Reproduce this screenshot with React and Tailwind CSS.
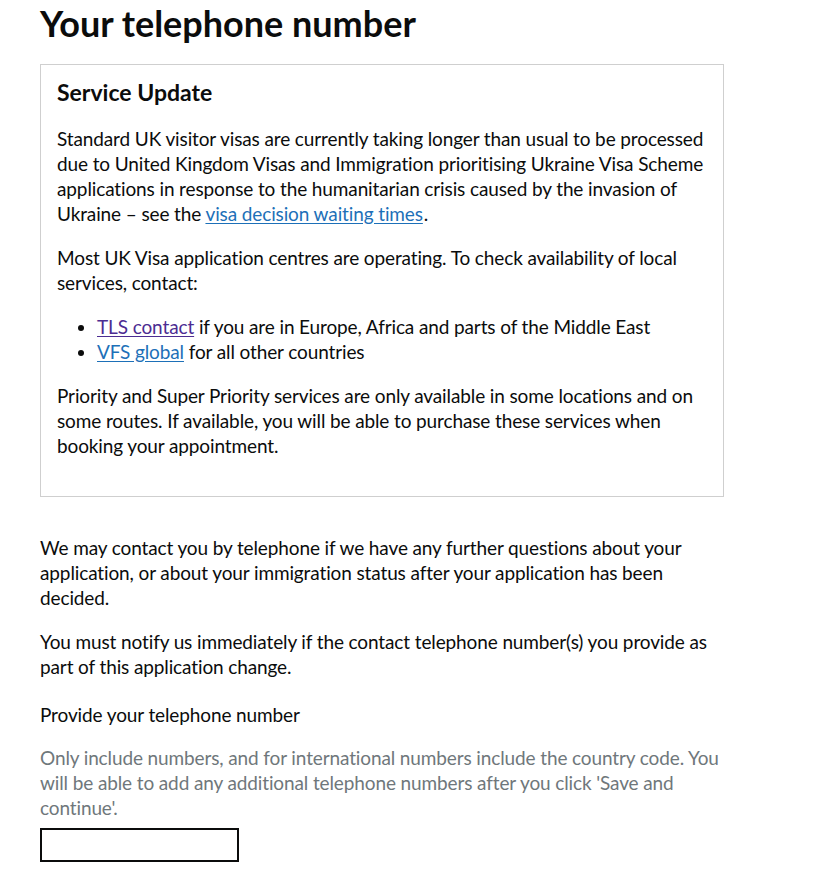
export default function App() {
  return (
    <div
      className="min-h-[891px] bg-white px-10 pb-8 text-[#0b0c0c] tracking-[-0.12px]"
      style={{ fontFamily: "Lato, 'Liberation Sans', sans-serif" }}
    >
      <h1 className="pt-[1px] text-[36px] font-bold leading-[44px] tracking-normal">Your telephone number</h1>

      <div className="mt-[19px] w-[684px] border border-[#cfcfcf] px-4 pt-[12px] pb-[38px] text-[19px] leading-[25px]">
        <h2 className="mb-[19px] text-[23px] font-bold leading-[30px] tracking-normal">Service Update</h2>
        <p className="mb-[19px]">
          Standard UK visitor visas are currently taking longer than usual to be processed due to United
          Kingdom Visas and Immigration prioritising Ukraine Visa Scheme applications in response to the
          humanitarian crisis caused by the invasion of Ukraine – see the{" "}
          <a href="#" className="mr-[1px] text-[#1d70b8] underline underline-offset-2">
            visa decision waiting times
          </a>
          .
        </p>
        <p className="mb-[19px]">
          Most UK Visa application centres are operating. To check availability of local services, contact:
        </p>
        <ul className="mb-[19px] list-disc pl-10">
          <li>
            <a href="#" className="text-[#4c2c92] underline underline-offset-2">
              TLS contact
            </a>{" "}
            if you are in Europe, Africa and parts of the Middle East
          </li>
          <li>
            <a href="#" className="text-[#1d70b8] underline underline-offset-2">
              VFS global
            </a>{" "}
            for all other countries
          </li>
        </ul>
        <p>
          Priority and Super Priority services are only available in some locations and on some routes. If
          available, you will be able to purchase these services when booking your appointment.
        </p>
      </div>

      <div className="mt-[38px] w-[684px] text-[19px] leading-[25px]">
        <p className="mb-[19px]">
          We may contact you by telephone if we have any further questions about your application, or about
          your immigration status after your application has been decided.
        </p>
        <p className="mb-[23px]">
          You must notify us immediately if the contact telephone number(s) you provide as part of this
          application change.
        </p>
        <label className="mb-[18px] block">Provide your telephone number</label>
        <p className="mb-[8px] text-[#6f777b]">
          Only include numbers, and for international numbers include the country code. You will be able to
          add any additional telephone numbers after you click 'Save and continue'.
        </p>
        <input type="text" className="block h-[34px] w-[199px] border-2 border-[#0b0c0c] px-1 outline-none" />
      </div>
    </div>
  );
}
